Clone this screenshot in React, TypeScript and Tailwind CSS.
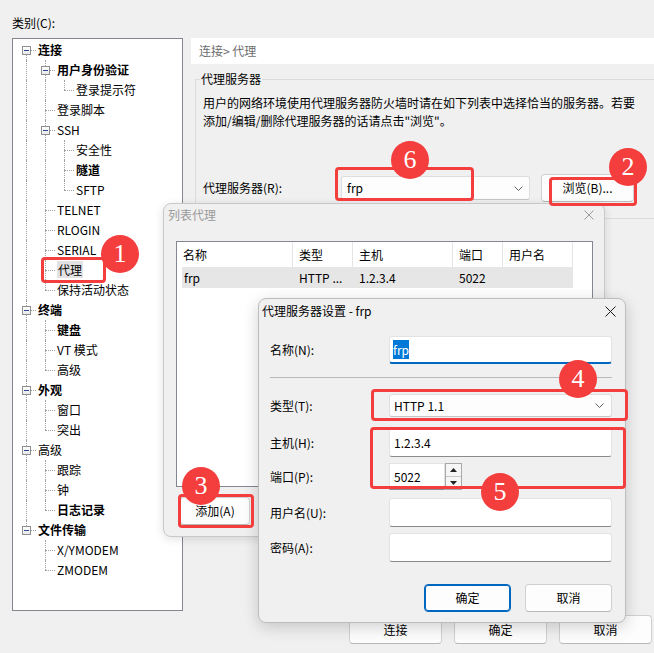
import React from "react";

type Row = { t: string; l: number; b?: boolean; e?: boolean; s?: boolean };

const rows: Row[] = [
  { t: "连接", l: 0, b: true, e: true },
  { t: "用户身份验证", l: 1, b: true, e: true },
  { t: "登录提示符", l: 2 },
  { t: "登录脚本", l: 1 },
  { t: "SSH", l: 1, e: true },
  { t: "安全性", l: 2 },
  { t: "隧道", l: 2, b: true },
  { t: "SFTP", l: 2 },
  { t: "TELNET", l: 1 },
  { t: "RLOGIN", l: 1 },
  { t: "SERIAL", l: 1 },
  { t: "代理", l: 1, s: true },
  { t: "保持活动状态", l: 1 },
  { t: "终端", l: 0, b: true, e: true },
  { t: "键盘", l: 1, b: true },
  { t: "VT 模式", l: 1 },
  { t: "高级", l: 1 },
  { t: "外观", l: 0, b: true, e: true },
  { t: "窗口", l: 1 },
  { t: "突出", l: 1 },
  { t: "高级", l: 0, e: true },
  { t: "跟踪", l: 1 },
  { t: "钟", l: 1 },
  { t: "日志记录", l: 1, b: true },
  { t: "文件传输", l: 0, b: true, e: true },
  { t: "X/YMODEM", l: 1 },
  { t: "ZMODEM", l: 1 },
];

// x of the connector column and of the label for each level
const LINE_X = ["left-[13px]", "left-[32px]", "left-[51px]"];
const BOX_X = ["left-[9px]", "left-[28px]", "left-[47px]"];
const TEXT_X = ["pl-[25px]", "pl-[44px]", "pl-[63px]"];

const dot = "border-dotted border-[#a0a0a0]";

function continues(i: number, c: number) {
  for (let j = i + 1; j < rows.length; j++) {
    if (rows[j].l < c) return false;
    if (rows[j].l === c) return true;
  }
  return false;
}

function TreeRow({ row, i }: { row: Row; i: number }) {
  const cols = [];
  for (let c = 0; c < row.l; c++) {
    if (continues(i, c)) {
      cols.push(
        <span key={c} className={`absolute top-0 bottom-0 w-0 border-l ${dot} ${LINE_X[c]}`} />
      );
    }
  }
  return (
    <div className="relative h-[20px] leading-[20px]">
      {cols}
      {!(row.l === 0 && i === 0) && (
        <span className={`absolute top-0 h-[10px] w-0 border-l ${dot} ${LINE_X[row.l]}`} />
      )}
      {continues(i, row.l) && (
        <span className={`absolute top-[10px] bottom-0 w-0 border-l ${dot} ${LINE_X[row.l]}`} />
      )}
      <span className={`absolute top-[10px] h-0 w-[10px] border-t ${dot} ${LINE_X[row.l]}`} />
      {row.e && (
        <span
          className={`absolute top-[6px] flex h-[9px] w-[9px] items-center justify-center border border-[#8f8f8f] bg-gradient-to-b from-white to-[#e8e8e8] ${BOX_X[row.l]}`}
        >
          <span className="h-px w-[5px] bg-[#2b4a8f]" />
        </span>
      )}
      <div className={`whitespace-nowrap ${TEXT_X[row.l]}`}>
        <span className={`${row.b ? "font-bold" : ""} ${row.s ? "bg-[#e2e2e2] px-px" : ""}`}>{row.t}</span>
      </div>
    </div>
  );
}

function Chevron() {
  return (
    <svg width="9" height="5" viewBox="0 0 9 5" className="shrink-0">
      <polyline points="0.5,0.5 4.5,4.5 8.5,0.5" fill="none" stroke="#606060" strokeWidth="1" />
    </svg>
  );
}

function CloseX({ color, size }: { color: string; size: number }) {
  return (
    <svg width={size} height={size} viewBox={`0 0 ${size} ${size}`}>
      <line x1="0.5" y1="0.5" x2={size - 0.5} y2={size - 0.5} stroke={color} strokeWidth="1" />
      <line x1={size - 0.5} y1="0.5" x2="0.5" y2={size - 0.5} stroke={color} strokeWidth="1" />
    </svg>
  );
}

function Btn({ label, w, h, primary }: { label: string; w: string; h: string; primary?: boolean }) {
  return (
    <div
      className={`flex items-center justify-center rounded-[4px] bg-[#fdfdfd] ${w} ${h} ${
        primary ? "border border-[#0067c0] shadow-[inset_0_0_0_1px_#0067c0]" : "border border-[#d0d0d0] border-b-[#b8b8b8]"
      }`}
    >
      {label}
    </div>
  );
}

function Field({ h, children }: { h: string; children?: React.ReactNode }) {
  return (
    <div
      className={`flex w-[223px] items-center rounded-[3px] border border-[#e3e3e3] border-b-[#8a8a8a] bg-white pl-[4px] ${h}`}
    >
      {children}
    </div>
  );
}

function Label({ children }: { children: React.ReactNode }) {
  return <div className="w-[119px] shrink-0 whitespace-nowrap">{children}</div>;
}

function Badge({ n, pos }: { n: string; pos: string }) {
  return (
    <div
      className={`absolute flex h-[38px] w-[38px] items-center justify-center rounded-full bg-[#f43d3d] font-['Liberation_Serif',serif] text-[26px] leading-none text-white ${pos}`}
    >
      {n}
    </div>
  );
}

function Mark({ pos }: { pos: string }) {
  return <div className={`absolute rounded-[4px] border-[3px] border-[#f43d3d] ${pos}`} />;
}

export default function App() {
  return (
    <div className="relative h-[653px] w-[654px] overflow-hidden bg-[#f0f0f0] font-['Noto_Sans_CJK_SC',sans-serif] text-[12px] text-black">
      <div className="flex h-full">
        {/* category tree */}
        <div className="ml-[12px] flex w-[171px] shrink-0 flex-col">
          <div className="h-[38px] pt-[15px] leading-[16px]">类别(C):</div>
          <div className="h-[573px] border border-[#828790] bg-white pt-px">
            {rows.map((r, i) => (
              <TreeRow key={i} row={r} i={i} />
            ))}
          </div>
        </div>

        {/* page */}
        <div className="ml-[8px] flex flex-1 flex-col pt-[38px]">
          <div className="h-[26px] bg-white pl-[8px] leading-[26px] text-[#6d6d6d]">连接&gt; 代理</div>

          <div className="relative ml-[4px] mr-[-20px] mt-[15px] h-[140px] border border-[#dcdcdc]">
            <div className="absolute -top-[9px] left-[4px] bg-[#f0f0f0] px-px leading-[16px]">代理服务器</div>
            <div className="whitespace-nowrap pl-[7px] pt-[14px] leading-[18px]">
              用户的网络环境使用代理服务器防火墙时请在如下列表中选择恰当的服务器。若要
              <br />
              添加/编辑/删除代理服务器的话请点击&quot;浏览&quot;。
            </div>
            <div className="mt-[44px] flex items-center pl-[7px]">
              <div className="w-[138px] shrink-0 whitespace-nowrap">代理服务器(R):</div>
              <div className="flex h-[24px] w-[189px] items-center justify-between rounded-[3px] border border-[#dedede] border-b-[#c4c4c4] bg-[#fdfdfd] pl-[5px] pr-[6px]">
                <span>frp</span>
                <Chevron />
              </div>
              <div className="ml-[11px]">
                <Btn label="浏览(B)..." w="w-[93px]" h="h-[28px]" />
              </div>
            </div>
          </div>

          <div className="flex-1" />
          <div className="mb-[9px] flex justify-end gap-[12px] pr-[2px]">
            <Btn label="连接" w="w-[93px]" h="h-[29px]" />
            <Btn label="确定" w="w-[93px]" h="h-[29px]" />
            <Btn label="取消" w="w-[93px]" h="h-[29px]" />
          </div>
        </div>
      </div>

      {/* list of proxies dialog (inactive) */}
      <div className="absolute left-[163px] top-[203px] h-[334px] w-[442px] rounded-[8px] border border-[#c9c9c9] bg-[#f0f0f0] shadow-[0_2px_10px_rgba(0,0,0,0.12)]">
        <div className="flex h-[22px] items-center justify-between pl-[4px] pr-[10px] text-[#9a9a9a]">
          <span>列表代理</span>
          <CloseX color="#9a9a9a" size={10} />
        </div>
        <div className="ml-[12px] mt-[15px] h-[246px] w-[417px] border border-[#828790] bg-white">
          <div className="flex h-[25px] items-center">
            <div className="h-full w-[116px] border-r border-[#e5e5e5] pl-[6px] leading-[25px]">名称</div>
            <div className="h-full w-[60px] border-r border-[#e5e5e5] pl-[6px] leading-[25px]">类型</div>
            <div className="h-full w-[100px] border-r border-[#e5e5e5] pl-[6px] leading-[25px]">主机</div>
            <div className="h-full w-[50px] border-r border-[#e5e5e5] pl-[6px] leading-[25px]">端口</div>
            <div className="h-full w-[70px] border-r border-[#e5e5e5] pl-[6px] leading-[25px]">用户名</div>
          </div>
          <div className="ml-[5px] flex h-[21px] w-[391px] items-center bg-[#e6e6e6] leading-[21px]">
            <div className="w-[111px] pl-[2px]">frp</div>
            <div className="w-[60px] pl-[6px] whitespace-nowrap">HTTP ...</div>
            <div className="w-[100px] pl-[6px]">1.2.3.4</div>
            <div className="w-[50px] pl-[6px]">5022</div>
          </div>
        </div>
        <div className="ml-[16px] mt-[10px]">
          <Btn label="添加(A)" w="w-[70px]" h="h-[28px]" />
        </div>
      </div>

      {/* proxy settings dialog (active) */}
      <div className="absolute left-[258px] top-[298px] h-[325px] w-[368px] rounded-[8px] border border-[#bdbdbd] bg-[#f0f0f0] shadow-[0_4px_16px_rgba(0,0,0,0.18)]">
        <div className="flex h-[24px] items-center justify-between pl-[3px] pr-[9px]">
          <span>代理服务器设置 - frp</span>
          <CloseX color="#1a1a1a" size={11} />
        </div>
        <div className="flex flex-col pl-[11px]">
          <div className="mt-[13px] flex items-center">
            <Label>名称(N):</Label>
            <div className="flex h-[28px] w-[223px] items-center rounded-[3px] border border-[#e3e3e3] border-b-2 border-b-[#0067c0] bg-white pl-[3px]">
              <span className="bg-[#0078d7] leading-[19px] text-white">frp</span>
            </div>
          </div>
          <div className="mt-[13px] h-px w-[342px] bg-[#b9b9b9]" />
          <div className="mt-[16px] flex items-center">
            <Label>类型(T):</Label>
            <div className="flex h-[23px] w-[223px] items-center justify-between rounded-[3px] border border-[#dedede] border-b-[#c4c4c4] bg-[#fdfdfd] pl-[4px] pr-[7px]">
              <span>HTTP 1.1</span>
              <Chevron />
            </div>
          </div>
          <div className="mt-[11px] flex items-center">
            <Label>主机(H):</Label>
            <Field h="h-[29px]">1.2.3.4</Field>
          </div>
          <div className="mt-[6px] flex items-center">
            <Label>端口(P):</Label>
            <div className="flex h-[27px]">
              <div className="flex w-[56px] items-center border border-[#e3e3e3] border-b-[#8a8a8a] bg-white pl-[4px]">5022</div>
              <div className="flex w-[17px] flex-col border border-[#a8a8a8] bg-[#f6f6f6]">
                <div className="flex flex-1 items-center justify-center border-b border-[#c8c8c8]">
                  <svg width="7" height="4" viewBox="0 0 7 4"><polygon points="3.5,0 7,4 0,4" fill="#222" /></svg>
                </div>
                <div className="flex flex-1 items-center justify-center">
                  <svg width="7" height="4" viewBox="0 0 7 4"><polygon points="0,0 7,0 3.5,4" fill="#222" /></svg>
                </div>
              </div>
            </div>
          </div>
          <div className="mt-[8px] flex items-center">
            <Label>用户名(U):</Label>
            <Field h="h-[29px]" />
          </div>
          <div className="mt-[6px] flex items-center">
            <Label>密码(A):</Label>
            <Field h="h-[29px]" />
          </div>
          <div className="mt-[22px] flex justify-end gap-[14px] pr-[13px]">
            <Btn label="确定" w="w-[87px]" h="h-[28px]" primary />
            <Btn label="取消" w="w-[87px]" h="h-[28px]" />
          </div>
        </div>
      </div>

      {/* red annotations */}
      <Mark pos="left-[41px] top-[257px] h-[26px] w-[65px]" />
      <Mark pos="left-[335px] top-[167px] h-[34px] w-[139px]" />
      <Mark pos="left-[549px] top-[177px] h-[29px] w-[88px]" />
      <Mark pos="left-[178px] top-[494px] h-[34px] w-[76px]" />
      <Mark pos="left-[371px] top-[389px] h-[32px] w-[257px]" />
      <Mark pos="left-[370px] top-[427px] h-[62px] w-[256px]" />
      <Badge n="1" pos="left-[101px] top-[235px]" />
      <Badge n="2" pos="left-[609px] top-[148px]" />
      <Badge n="3" pos="left-[182px] top-[467px]" />
      <Badge n="4" pos="left-[559px] top-[360px]" />
      <Badge n="5" pos="left-[481px] top-[473px]" />
      <Badge n="6" pos="left-[391px] top-[141px]" />
    </div>
  );
}
